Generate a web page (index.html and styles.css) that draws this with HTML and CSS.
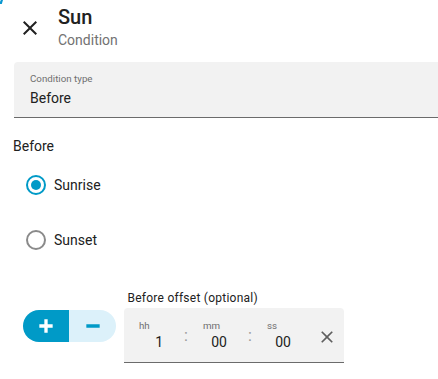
FILE: index.html
```html
<!DOCTYPE html>
<html>
<head>
<meta charset="utf-8">
<link rel="stylesheet" href="styles.css">
</head>
<body>
<div class="corner-mark"></div>
<div class="page">
  <header class="header">
    <div class="close-btn">
      <svg viewBox="0 0 24 24" width="24" height="24"><path d="M19,6.41L17.59,5L12,10.59L6.41,5L5,6.41L10.59,12L5,17.59L6.41,19L12,13.41L17.59,19L19,17.59L13.41,12L19,6.41Z"/></svg>
    </div>
    <div class="titles">
      <div class="title">Sun</div>
      <div class="subtitle">Condition</div>
    </div>
  </header>

  <div class="select-field">
    <div class="field-label">Condition type</div>
    <div class="field-value">Before</div>
  </div>

  <div class="section-label">Before</div>

  <div class="radio-row first">
    <span class="radio checked"></span>
    <span class="radio-text">Sunrise</span>
  </div>
  <div class="radio-row">
    <span class="radio"></span>
    <span class="radio-text">Sunset</span>
  </div>

  <div class="bottom-row">
    <div class="toggle">
      <div class="toggle-plus">
        <svg viewBox="0 0 24 24" width="20" height="20"><path d="M20 14H14V20H10V14H4V10H10V4H14V10H20V14Z"/></svg>
      </div>
      <div class="toggle-minus">
        <svg viewBox="0 0 24 24" width="20" height="20"><path d="M20 14H4V10H20V14Z"/></svg>
      </div>
    </div>
    <div class="offset">
      <div class="offset-label">Before offset (optional)</div>
      <div class="time-field">
        <div class="segment">
          <div class="seg-label">hh</div>
          <div class="seg-value">1</div>
        </div>
        <div class="sep">:</div>
        <div class="segment">
          <div class="seg-label">mm</div>
          <div class="seg-value">00</div>
        </div>
        <div class="sep">:</div>
        <div class="segment">
          <div class="seg-label">ss</div>
          <div class="seg-value">00</div>
        </div>
        <div class="clear-btn">
          <svg viewBox="0 0 24 24" width="20" height="20"><path d="M19,6.41L17.59,5L12,10.59L6.41,5L5,6.41L10.59,12L5,17.59L6.41,19L12,13.41L17.59,19L19,17.59L13.41,12L19,6.41Z"/></svg>
        </div>
      </div>
    </div>
  </div>
</div>
</body>
</html>
```

FILE: styles.css
```css
* { box-sizing: border-box; }

html, body {
  margin: 0;
  padding: 0;
  background: #ffffff;
}

body {
  font-family: Roboto, "Liberation Sans", sans-serif;
  color: #212121;
  width: 438px;
  height: 379px;
  overflow: hidden;
  position: relative;
}

.corner-mark {
  position: absolute;
  left: 0;
  top: 0;
  width: 3px;
  height: 4px;
  background: #0a97d0;
  clip-path: polygon(30% 0, 100% 0, 60% 100%, 0 100%, 0 40%);
}

.header {
  display: flex;
  align-items: flex-start;
  padding: 5px 0 0 18px;
}

.close-btn {
  width: 24px;
  height: 24px;
  margin-top: 11px;
  display: flex;
}

.close-btn svg { fill: #212121; }

.titles {
  margin-left: 16px;
}

.title {
  font-size: 20px;
  font-weight: 500;
  line-height: 24px;
  color: #212121;
}

.subtitle {
  font-size: 14px;
  line-height: 20px;
  color: #727272;
  margin-top: 0.5px;
}

.select-field {
  margin: 12.5px 0 0 14px;
  height: 56px;
  background: #f2f2f2;
  border-bottom: 1px solid #6b6b6b;
  border-radius: 4px 0 0 0;
  padding: 10.5px 0 0 16px;
}

.field-label {
  font-size: 9.75px;
  line-height: 12px;
  color: #6f6f6f;
}

.field-value {
  font-size: 14px;
  line-height: 20px;
  margin-top: 3.2px;
  color: #212121;
}

.section-label {
  font-size: 14px;
  line-height: 20px;
  margin: 18px 0 0 13px;
  color: #212121;
}

.radio-row {
  display: flex;
  align-items: center;
  height: 40px;
  padding-left: 26px;
  margin-top: 15px;
}

.radio-row.first {
  margin-top: 9px;
}

.radio {
  width: 20px;
  height: 20px;
  border-radius: 50%;
  border: 2px solid #8a8a8a;
  position: relative;
  flex: none;
}

.radio.checked {
  border-color: #009ac7;
}

.radio.checked::after {
  content: "";
  position: absolute;
  left: 3px;
  top: 3px;
  width: 10px;
  height: 10px;
  border-radius: 50%;
  background: #009ac7;
}

.radio-text {
  font-size: 14px;
  line-height: 20px;
  margin-left: 8px;
  color: #212121;
}

.bottom-row {
  display: flex;
  align-items: flex-start;
  margin-top: 30px;
  padding-left: 23px;
}

.toggle {
  display: flex;
  width: 93px;
  height: 32px;
  border-radius: 16px;
  overflow: hidden;
  margin-top: 19.5px;
  flex: none;
}

.toggle-plus {
  width: 46px;
  background: #009ac7;
  display: flex;
  align-items: center;
  justify-content: center;
}

.toggle-plus svg { fill: #ffffff; }

.toggle-minus {
  width: 47px;
  background: #dcf1fa;
  display: flex;
  align-items: center;
  justify-content: center;
}

.toggle-minus svg { fill: #009ac7; }

.offset {
  margin-left: 8px;
}

.offset-label {
  font-size: 12px;
  line-height: 16px;
  letter-spacing: 0.25px;
  padding-left: 3.5px;
  color: #212121;
}

.time-field {
  margin-top: 2.4px;
  width: 220px;
  height: 55px;
  background: #f2f2f2;
  border-bottom: 1px solid #6b6b6b;
  border-radius: 4px 4px 0 0;
  display: flex;
  align-items: flex-start;
  padding: 12px 0 0 15px;
}

.segment {
  width: 24px;
  display: flex;
  flex-direction: column;
}

.seg-label {
  font-size: 9.75px;
  line-height: 12px;
  color: #6f6f6f;
}

.seg-value {
  font-size: 14px;
  line-height: 20px;
  text-align: right;
  color: #212121;
}

.sep {
  width: 40px;
  padding-left: 21px;
  font-size: 16px;
  line-height: 20px;
  margin-top: 5.2px;
  color: #9a9a9a;
}

.clear-btn {
  width: 20px;
  height: 20px;
  margin-left: 25.5px;
  margin-top: 6.7px;
  display: flex;
}

.clear-btn svg { fill: #5f5f5f; }
```
